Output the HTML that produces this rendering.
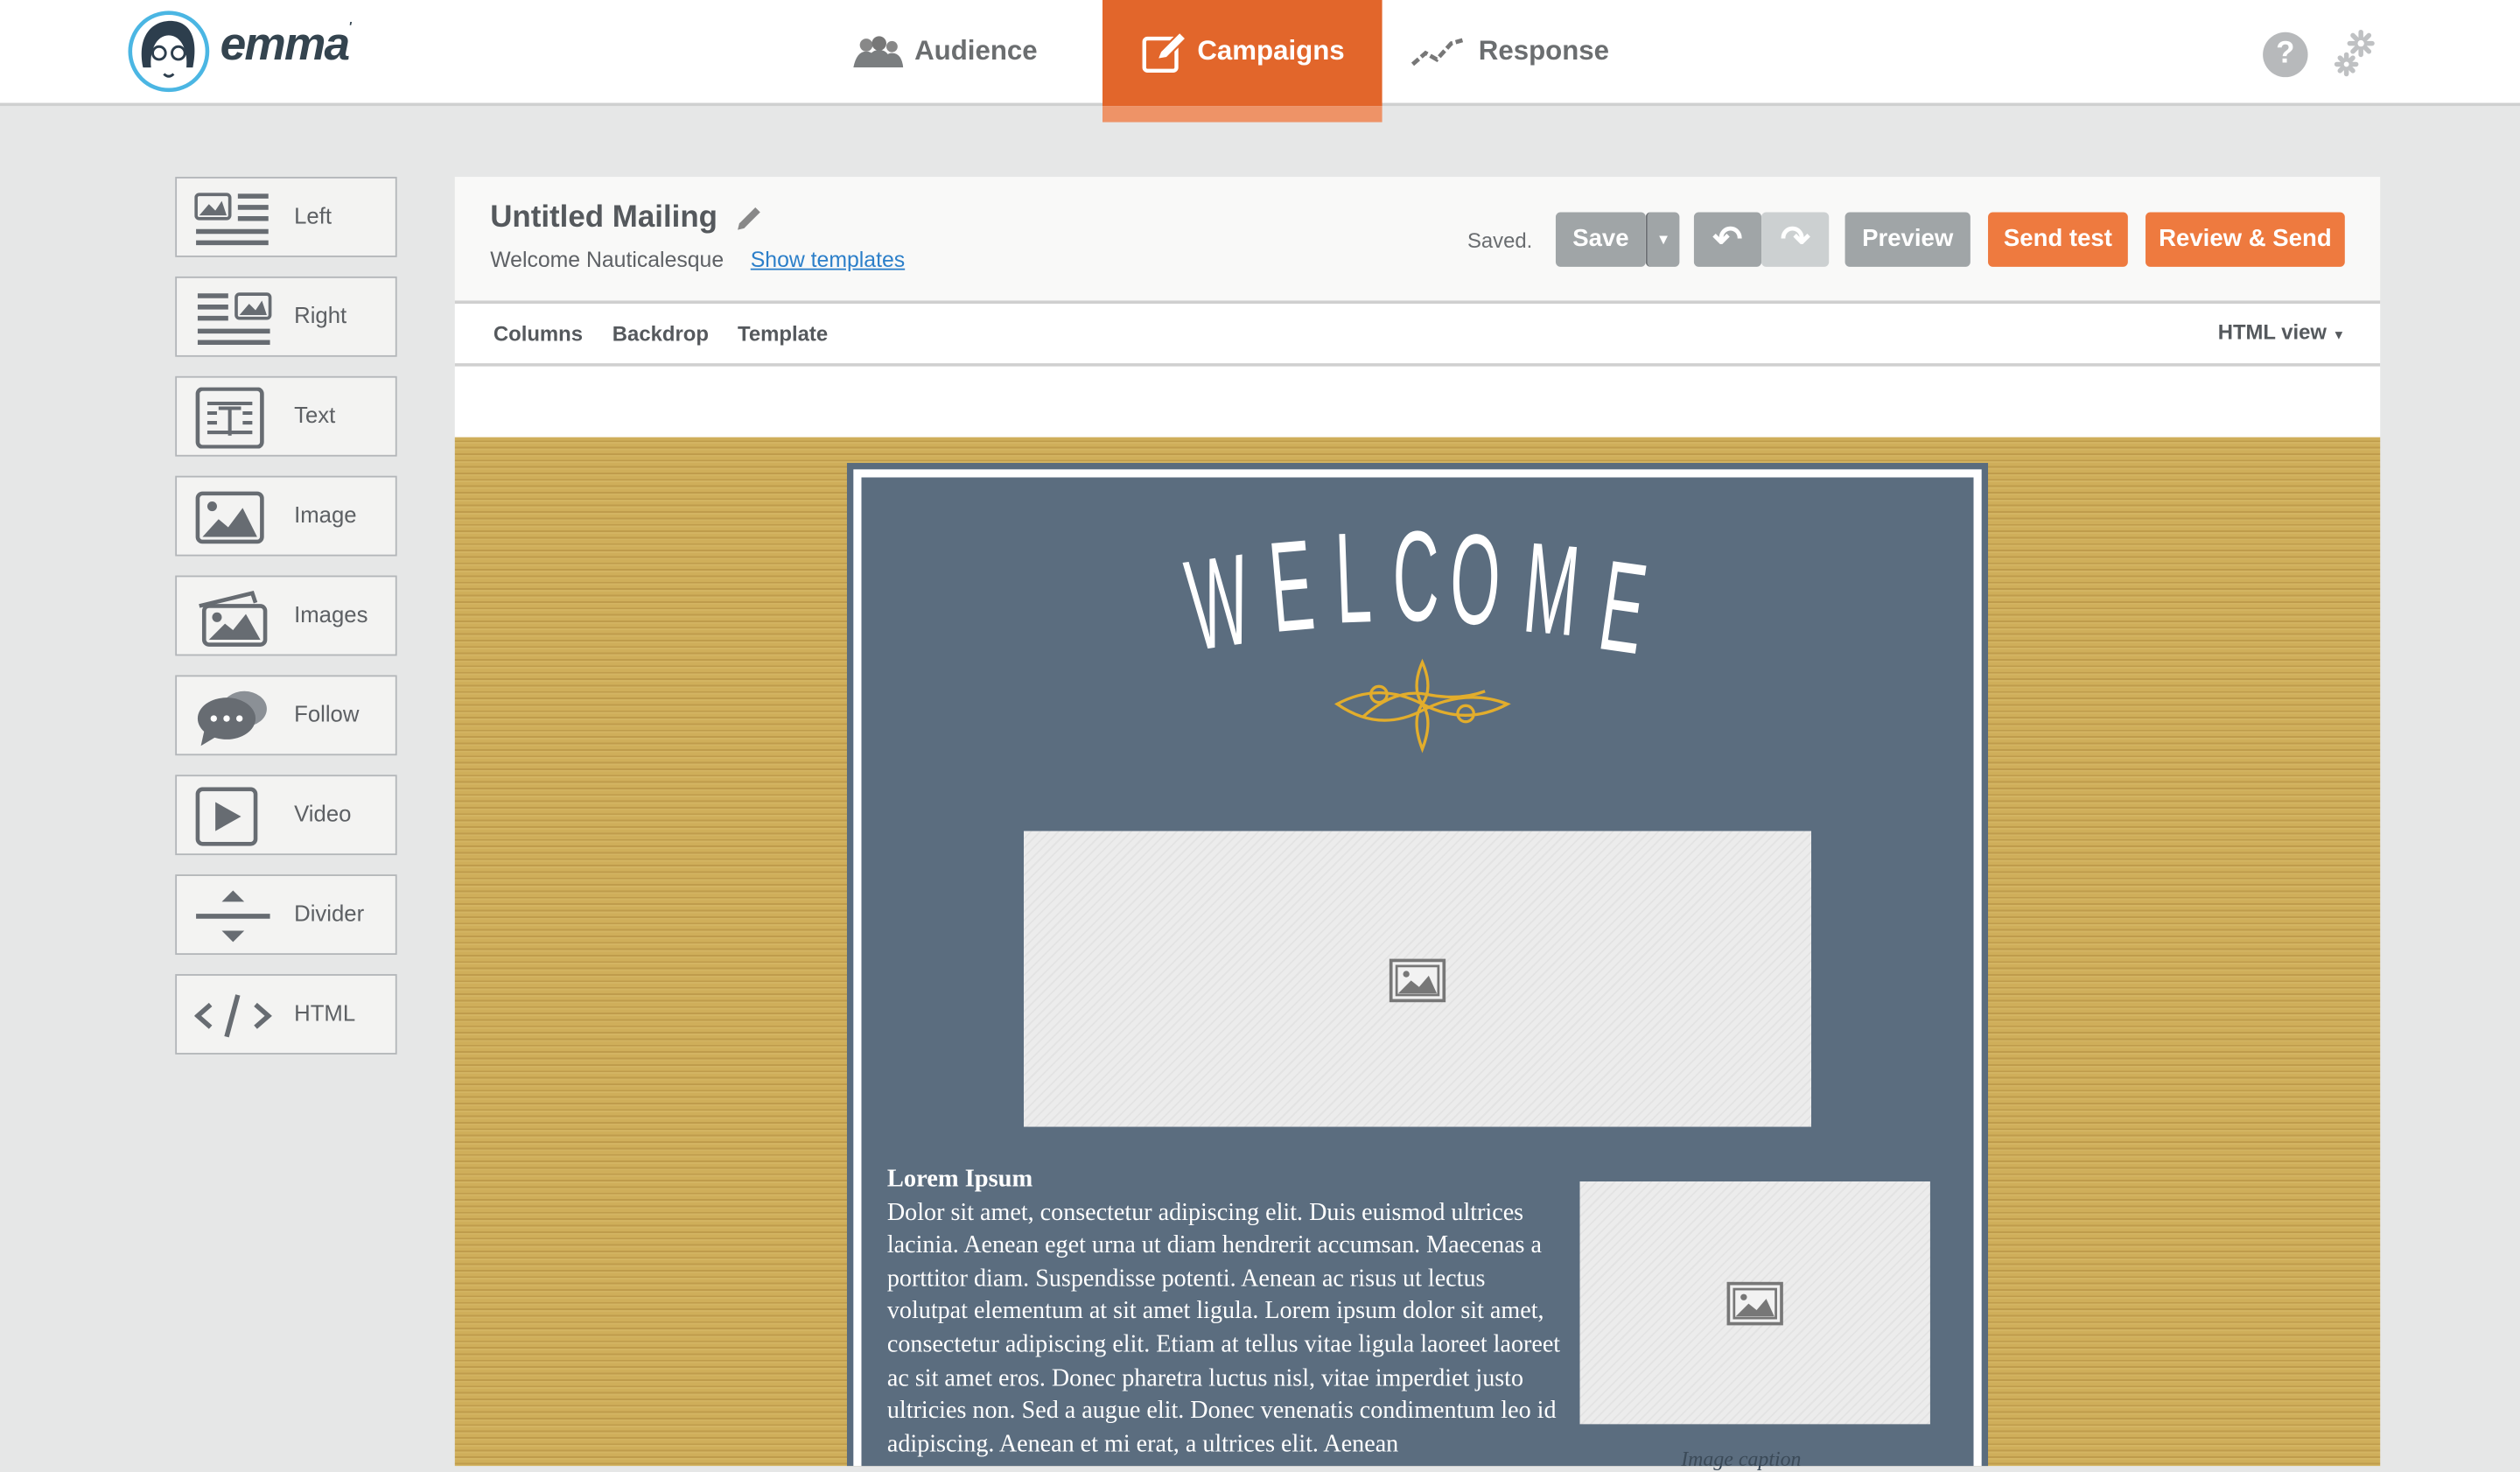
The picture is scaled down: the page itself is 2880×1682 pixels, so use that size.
<!DOCTYPE html>
<html><head><meta charset="utf-8">
<style>
html,body{margin:0;padding:0;width:2880px;height:1676px;overflow:hidden;background:#e6e7e7;}
#w{position:absolute;left:0;top:0;width:1568px;height:912px;transform:scale(1.836735);transform-origin:0 0;font-family:"Liberation Sans",sans-serif;}
.abs{position:absolute;}
#hdr{left:0;top:0;width:1568px;height:64px;background:#fff;border-bottom:2px solid #cfd0d0;}
.nav{top:0;height:64px;line-height:64px;font-size:17px;font-weight:bold;color:#6b6e70;}
.sb{left:109px;width:136px;height:48px;background:#f3f3f2;border:1px solid #b3b6b9;}
.sb span{position:absolute;left:73px;top:15px;font-size:14px;color:#5d6064;}
.sb svg{position:absolute;left:11px;top:6px;}
.btn{top:132px;height:34px;line-height:34px;border-radius:3px;color:#fff;font-weight:bold;font-size:15px;text-align:center;}
.g{background:#a0a5a7;}
.o{background:#ee7a3f;}
.hatch{background:repeating-linear-gradient(135deg,#ececec 0 3px,#e3e3e3 3px 4px);}
</style></head><body>
<div id="w">
<div id="hdr" class="abs"></div>
<svg class="abs" style="left:79px;top:6px" width="52" height="52" viewBox="0 0 52 52">
<circle cx="26" cy="26" r="24" fill="#fff" stroke="#4bb6e3" stroke-width="2.5"/>
<path d="M10 36 C6 16 16 7 27 7 C38 7 45 16 41 36 L37 36 C38 26 34 16 26 16 C18 16 14 26 15 36Z" fill="#2d3e4d"/>
<circle cx="20" cy="27" r="4" fill="none" stroke="#2d3e4d" stroke-width="1.6"/>
<circle cx="32" cy="27" r="4" fill="none" stroke="#2d3e4d" stroke-width="1.6"/>
<path d="M23 40 Q26 43 29 40" stroke="#2d3e4d" stroke-width="1.6" fill="none"/>
</svg>
<div class="abs" style="left:137px;top:12px;font-size:29px;font-weight:bold;font-style:italic;color:#34444f;letter-spacing:-1px">emma<span style="font-size:8px;vertical-align:top">'</span></div>
<svg class="abs" style="left:530px;top:22px" width="32" height="20" viewBox="0 0 32 20"><circle cx="9" cy="6" r="4" fill="#888"/><circle cx="17" cy="5" r="4.5" fill="#777"/><circle cx="25" cy="7" r="3.5" fill="#888"/><path d="M1 20 Q3 10 9 10 Q15 10 16 20Z M9 20 Q10 9 17 9 Q24 9 25 20Z M19 20 Q20 11 25 11 Q31 11 32 20Z" fill="#7b7e80"/></svg>
<div class="abs nav" style="left:569px">Audience</div>
<div class="abs" style="left:686px;top:0;width:174px;height:66px;background:#e2662b"></div>
<div class="abs" style="left:686px;top:66px;width:174px;height:10px;background:#ee9367"></div>
<svg class="abs" style="left:710px;top:19px" width="30" height="28" viewBox="0 0 30 28"><rect x="2" y="5" width="20" height="20" rx="2" fill="none" stroke="#fff" stroke-width="2.4"/><path d="M10 18 L12 13 L24 1 L28 5 L16 17Z" fill="#fff" stroke="#e2662b" stroke-width="1.2"/></svg>
<div class="abs nav" style="left:745px;color:#fff">Campaigns</div>
<svg class="abs" style="left:878px;top:22px" width="34" height="20" viewBox="0 0 34 20"><path d="M1 18 L9 11 L16 15 L25 5 L32 3" fill="none" stroke="#777" stroke-width="2.6" stroke-dasharray="5 2"/></svg>
<div class="abs nav" style="left:920px">Response</div>
<div class="abs" style="left:1408px;top:20px;width:28px;height:28px;border-radius:50%;background:#b7b9bb;color:#fff;font-weight:bold;font-size:19px;text-align:center;line-height:28px">?</div>
<svg class="abs" style="left:1452px;top:18px" width="28" height="30" viewBox="0 0 28 30"><g stroke="#bfc1c3" stroke-width="3" stroke-linecap="round"><path d="M17 2V16M10 9H24M12 4L22 14M22 4L12 14"/><path d="M8 16V28M2 22H14M4 18L12 26M12 18L4 26"/></g><circle cx="17" cy="9" r="2" fill="#fff"/><circle cx="8" cy="22" r="1.6" fill="#fff"/></svg>

<div class="abs sb" style="top:110px"><svg width="50" height="38" viewBox="0 0 50 38"><rect x="1" y="4" width="21" height="15" rx="2" fill="none" stroke="#676c72" stroke-width="2"/><path d="M3 17 L9 10 L13 14 L17 8 L20 17Z" fill="#676c72"/><g stroke="#676c72" stroke-width="3"><path d="M27 5H46M27 12H46M27 19H46M1 27H46M1 34H46"/></g></svg><span>Left</span></div>
<div class="abs sb" style="top:172px"><svg width="50" height="38" viewBox="0 0 50 38"><rect x="26" y="4" width="21" height="15" rx="2" fill="none" stroke="#676c72" stroke-width="2"/><path d="M28 17 L34 10 L38 14 L42 8 L45 17Z" fill="#676c72"/><g stroke="#676c72" stroke-width="3"><path d="M2 5H21M2 12H21M2 19H21M2 27H47M2 34H47"/></g></svg><span>Right</span></div>
<div class="abs sb" style="top:234px"><svg width="50" height="38" viewBox="0 0 50 38"><rect x="2" y="1" width="40" height="36" rx="3" fill="none" stroke="#676c72" stroke-width="2.5"/><path d="M8 10H36M8 16H14M30 16H36M8 22H14M30 22H36M8 28H36M15 13H29M22 13V30" stroke="#676c72" stroke-width="2.2"/></svg><span>Text</span></div>
<div class="abs sb" style="top:296px"><svg width="50" height="38" viewBox="0 0 50 38"><rect x="2" y="4" width="40" height="30" rx="3" fill="none" stroke="#676c72" stroke-width="2.5"/><circle cx="11" cy="12" r="3" fill="#676c72"/><path d="M5 31 L15 20 L21 25 L30 13 L39 31Z" fill="#676c72"/></svg><span>Image</span></div>
<div class="abs sb" style="top:358px"><svg width="50" height="38" viewBox="0 0 50 38"><path d="M3 12 L36 4 L38 10" fill="none" stroke="#676c72" stroke-width="2.5"/><rect x="6" y="12" width="38" height="24" rx="3" fill="none" stroke="#676c72" stroke-width="2.5"/><circle cx="14" cy="19" r="3" fill="#676c72"/><path d="M9 33 L19 23 L24 27 L32 17 L41 33Z" fill="#676c72"/></svg><span>Images</span></div>
<div class="abs sb" style="top:420px"><svg width="50" height="38" viewBox="0 0 50 38"><ellipse cx="31" cy="14" rx="14" ry="11" fill="#8b9096"/><ellipse cx="20" cy="20" rx="18" ry="13" fill="#676c72"/><path d="M6 28 L4 37 L14 31Z" fill="#676c72"/><g fill="#fff"><circle cx="12" cy="20" r="2"/><circle cx="20" cy="20" r="2"/><circle cx="28" cy="20" r="2"/></g></svg><span>Follow</span></div>
<div class="abs sb" style="top:482px"><svg width="50" height="38" viewBox="0 0 50 38"><rect x="2" y="2" width="36" height="34" rx="3" fill="none" stroke="#676c72" stroke-width="2.5"/><path d="M13 10 L29 19 L13 28Z" fill="#676c72"/></svg><span>Video</span></div>
<div class="abs sb" style="top:544px"><svg width="50" height="38" viewBox="0 0 50 38"><path d="M17 10 L24 3 L31 10Z M17 28 L24 35 L31 28Z" fill="#676c72"/><path d="M1 19H47" stroke="#676c72" stroke-width="3"/></svg><span>Divider</span></div>
<div class="abs sb" style="top:606px"><svg width="50" height="38" viewBox="0 0 50 38"><path d="M10 12 L2 19 L10 26 M38 12 L46 19 L38 26 M27 6 L20 32" fill="none" stroke="#676c72" stroke-width="3"/></svg><span>HTML</span></div>

<div class="abs" style="left:283px;top:110px;width:1198px;height:77px;background:#f9f9f8;border-bottom:2px solid #cfcfcf"></div>
<div class="abs" style="left:305px;top:125px;font-size:19px;font-weight:bold;color:#55595d">Untitled Mailing</div>
<svg class="abs" style="left:457px;top:127px" width="18" height="18" viewBox="0 0 18 18"><path d="M2 16 L3 12 L13 2 L16 5 L6 15Z" fill="#888"/></svg>
<div class="abs" style="left:305px;top:154px;font-size:13.5px;color:#5e6165">Welcome Nauticalesque</div>
<div class="abs" style="left:467px;top:154px;font-size:13.5px;color:#2c7fc9;text-decoration:underline">Show templates</div>
<div class="abs" style="left:913px;top:142px;font-size:13px;color:#6a6d70">Saved.</div>
<div class="abs btn g" style="left:968px;width:56px">Save</div>
<div class="abs btn g" style="left:1024px;width:20px;border-left:1px solid #6d7174;font-size:9px">▼</div>
<div class="abs btn g" style="left:1054px;width:42px;font-size:22px">↶</div>
<div class="abs btn" style="left:1096px;width:42px;background:#ccd0d1;font-size:22px">↷</div>
<div class="abs btn g" style="left:1148px;width:78px">Preview</div>
<div class="abs btn o" style="left:1237px;width:87px">Send test</div>
<div class="abs btn o" style="left:1335px;width:124px">Review &amp; Send</div>
<div class="abs" style="left:283px;top:189px;width:1198px;height:37px;background:#fff;border-bottom:2px solid #d0d0d0"></div>
<div class="abs" style="left:307px;top:200px;font-size:13px;font-weight:bold;color:#55595d">Columns</div>
<div class="abs" style="left:381px;top:200px;font-size:13px;font-weight:bold;color:#55595d">Backdrop</div>
<div class="abs" style="left:459px;top:200px;font-size:13px;font-weight:bold;color:#55595d">Template</div>
<div class="abs" style="left:1380px;top:199px;font-size:13px;font-weight:bold;color:#55595d">HTML view <span style="font-size:8px">▼</span></div>
<div class="abs" style="left:283px;top:228px;width:1198px;height:44px;background:#fff"></div>
<div class="abs" style="left:283px;top:272px;width:1198px;height:640px;background:repeating-linear-gradient(180deg,#cfae5a 0 2px,#bf9c4c 2px 3px,#d3b462 3px 4px)"></div>

<div class="abs" style="left:527px;top:288px;width:710px;height:624px;background:#5a6c7e"></div>
<div class="abs" style="left:531px;top:292px;width:702px;height:620px;background:#fff"></div>
<div class="abs" style="left:536px;top:297px;width:692px;height:615px;background:#5b6d7f"></div>
<svg class="abs" style="left:700px;top:320px" width="360" height="100" viewBox="700 320 360 100">
<g font-family="'Liberation Sans',sans-serif" font-size="80" fill="#fff" text-anchor="middle">
<text transform="translate(762 402) rotate(-8) scale(0.5 1)">W</text>
<text transform="translate(806 392) rotate(-5) scale(0.5 1)">E</text>
<text transform="translate(843 387) rotate(-2) scale(0.5 1)">L</text>
<text transform="translate(881 386) scale(0.5 1)">C</text>
<text transform="translate(917 388) rotate(2) scale(0.5 1)">O</text>
<text transform="translate(963 394) rotate(5) scale(0.5 1)">M</text>
<text transform="translate(1006 405) rotate(8) scale(0.5 1)">E</text>
</g></svg>
<svg class="abs" style="left:828px;top:408px" width="114" height="62" viewBox="0 0 114 62"><g fill="none" stroke="#e2ad2c" stroke-width="1.8"><path d="M4 30 Q30 16 57 30 Q84 44 110 30 Q84 20 57 34 Q30 48 4 30Z"/><path d="M57 4 Q50 20 57 30 Q64 40 57 58 Q50 40 57 30 Q64 20 57 4Z"/><circle cx="30" cy="24" r="5"/><circle cx="84" cy="36" r="5"/><path d="M20 38 Q40 20 60 24 Q80 28 96 22"/></g></svg>
<div class="abs hatch" style="left:637px;top:517px;width:490px;height:184px"></div>
<svg class="abs" style="left:864px;top:596px" width="36" height="28" viewBox="0 0 36 28"><rect x="1.5" y="1.5" width="33" height="25" fill="#f2f2f2" stroke="#777" stroke-width="2"/><rect x="5" y="5" width="26" height="18" fill="none" stroke="#777" stroke-width="1.5"/><circle cx="11" cy="10" r="2" fill="#777"/><path d="M6 22 L14 14 L19 18 L25 11 L30 22Z" fill="#777"/></svg>
<div class="abs" style="left:552px;top:724px;width:424px;font-family:'Liberation Serif',serif;font-size:15.3px;line-height:20.6px;color:#fff"><b style="font-size:15.5px">Lorem Ipsum</b><br>Dolor sit amet, consectetur adipiscing elit. Duis euismod ultrices lacinia. Aenean eget urna ut diam hendrerit accumsan. Maecenas a porttitor diam. Suspendisse potenti. Aenean ac risus ut lectus volutpat elementum at sit amet ligula. Lorem ipsum dolor sit amet, consectetur adipiscing elit. Etiam at tellus vitae ligula laoreet laoreet ac sit amet eros. Donec pharetra luctus nisl, vitae imperdiet justo ultricies non. Sed a augue elit. Donec venenatis condimentum leo id adipiscing. Aenean et mi erat, a ultrices elit. Aenean</div>
<div class="abs hatch" style="left:983px;top:735px;width:218px;height:151px"></div>
<svg class="abs" style="left:1074px;top:797px" width="36" height="28" viewBox="0 0 36 28"><rect x="1.5" y="1.5" width="33" height="25" fill="#f2f2f2" stroke="#777" stroke-width="2"/><rect x="5" y="5" width="26" height="18" fill="none" stroke="#777" stroke-width="1.5"/><circle cx="11" cy="10" r="2" fill="#777"/><path d="M6 22 L14 14 L19 18 L25 11 L30 22Z" fill="#777"/></svg>
<div class="abs" style="left:1046px;top:900px;font-family:'Liberation Serif',serif;font-style:italic;font-size:13px;color:#3b4a58">Image caption</div>
</div>
</body></html>
